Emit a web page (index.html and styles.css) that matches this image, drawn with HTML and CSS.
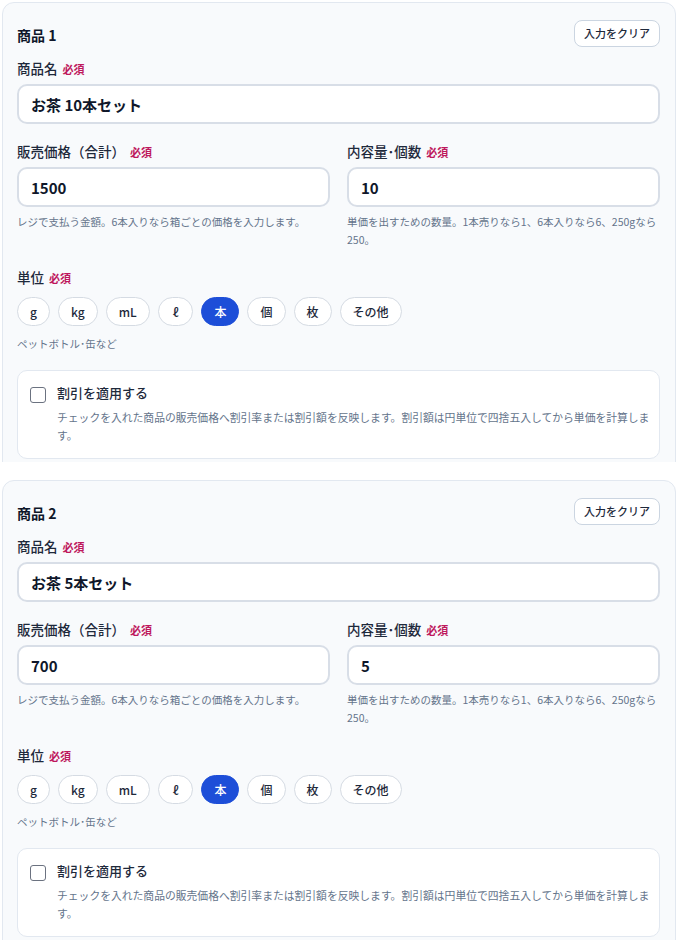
FILE: index.html
```html
<!DOCTYPE html>
<html lang="ja">
<head>
<meta charset="utf-8">
<title>商品入力</title>
<link rel="stylesheet" href="styles.css">
</head>
<body>
<div class="page">
  <div class="clip">
    <section class="card">
      <div class="card-head">
        <h2 class="card-title">商品 1</h2>
        <button class="clear-btn" type="button">入力をクリア</button>
      </div>
      <div class="field">
        <label class="label">商品名 <span class="req">必須</span></label>
        <input class="text-input" type="text" value="お茶 10本セット">
      </div>
      <div class="row">
        <div class="field">
          <label class="label">販売価格（合計） <span class="req">必須</span></label>
          <input class="text-input" type="text" value="1500">
          <p class="help">レジで支払う金額。6本入りなら箱ごとの価格を入力します。</p>
        </div>
        <div class="field">
          <label class="label">内容量･個数 <span class="req">必須</span></label>
          <input class="text-input" type="text" value="10">
          <p class="help">単価を出すための数量。1本売りなら1、6本入りなら6、250gなら250。</p>
        </div>
      </div>
      <div class="unit">
        <label class="label">単位 <span class="req">必須</span></label>
        <div class="pills">
          <span class="pill">g</span>
          <span class="pill">kg</span>
          <span class="pill">mL</span>
          <span class="pill wide">ℓ</span>
          <span class="pill active">本</span>
          <span class="pill">個</span>
          <span class="pill">枚</span>
          <span class="pill">その他</span>
        </div>
        <p class="hint">ペットボトル･缶など</p>
      </div>
      <div class="discount">
        <input class="check" type="checkbox">
        <div class="discount-body">
          <div class="discount-label">割引を適用する</div>
          <p class="discount-desc">チェックを入れた商品の販売価格へ割引率または割引額を反映します。割引額は円単位で四捨五入してから単価を計算します。</p>
        </div>
      </div>
    </section>
  </div>

  <section class="card second">
    <div class="card-head">
      <h2 class="card-title">商品 2</h2>
      <button class="clear-btn" type="button">入力をクリア</button>
    </div>
    <div class="field">
      <label class="label">商品名 <span class="req">必須</span></label>
      <input class="text-input" type="text" value="お茶 5本セット">
    </div>
    <div class="row">
      <div class="field">
        <label class="label">販売価格（合計） <span class="req">必須</span></label>
        <input class="text-input" type="text" value="700">
        <p class="help">レジで支払う金額。6本入りなら箱ごとの価格を入力します。</p>
      </div>
      <div class="field">
        <label class="label">内容量･個数 <span class="req">必須</span></label>
        <input class="text-input" type="text" value="5">
        <p class="help">単価を出すための数量。1本売りなら1、6本入りなら6、250gなら250。</p>
      </div>
    </div>
    <div class="unit">
      <label class="label">単位 <span class="req">必須</span></label>
      <div class="pills">
        <span class="pill">g</span>
        <span class="pill">kg</span>
        <span class="pill">mL</span>
        <span class="pill wide">ℓ</span>
        <span class="pill active">本</span>
        <span class="pill">個</span>
        <span class="pill">枚</span>
        <span class="pill">その他</span>
      </div>
      <p class="hint">ペットボトル･缶など</p>
    </div>
    <div class="discount">
      <input class="check" type="checkbox">
      <div class="discount-body">
        <div class="discount-label">割引を適用する</div>
        <p class="discount-desc">チェックを入れた商品の販売価格へ割引率または割引額を反映します。割引額は円単位で四捨五入してから単価を計算します。</p>
      </div>
    </div>
  </section>
</div>
</body>
</html>
```

FILE: styles.css
```css
* { box-sizing: border-box; }

html, body {
  margin: 0;
  background: #ffffff;
}

body {
  font-family: "Noto Sans CJK JP", "Noto Sans", sans-serif;
  color: #1e293b;
  overflow: hidden;
}

.page {
  padding: 2px 2px 0 2px;
}

.clip {
  height: 460px;
  overflow: hidden;
}

.card {
  background: #f8fafc;
  border: 1px solid #e2e8f0;
  border-radius: 12px;
  padding: 17px 15px 24px 14px;
  display: flex;
  flex-direction: column;
}

.card.second {
  margin-top: 18px;
}

.card-head {
  display: flex;
  justify-content: space-between;
  align-items: center;
  height: 27px;
  margin-bottom: 11px;
}

.card-title {
  margin: 2px 0 0 0;
  font-size: 14px;
  font-weight: 700;
  line-height: 20px;
  color: #0f172a;
}

.clear-btn {
  height: 27px;
  padding: 0 9px;
  background: #ffffff;
  border: 1px solid #cbd5e1;
  border-radius: 8px;
  font-family: inherit;
  font-size: 11px;
  font-weight: 500;
  color: #1e293b;
  line-height: 1;
}

.field {
  display: flex;
  flex-direction: column;
}

.label {
  display: block;
  font-size: 13.5px;
  font-weight: 500;
  line-height: 20px;
  color: #1e293b;
  margin-bottom: 5px;
}

.req {
  font-size: 11px;
  font-weight: 700;
  color: #be185d;
  margin-left: 2px;
}

.text-input {
  width: 100%;
  height: 40px;
  padding: 0 12px;
  background: #ffffff;
  border: 2px solid #d8dee7;
  border-radius: 10px;
  font-family: inherit;
  font-size: 15px;
  font-weight: 700;
  color: #0f172a;
  outline: none;
}

.row {
  display: grid;
  grid-template-columns: 1fr 1fr;
  column-gap: 17px;
  align-items: start;
  margin-top: 17px;
}

.help {
  margin: 6px 0 0 0;
  font-size: 10.5px;
  line-height: 18px;
  color: #64748b;
}

.unit {
  margin-top: 18px;
}

.unit .label {
  margin-bottom: 9px;
}

.pills {
  display: flex;
  gap: 8px;
}

.pill {
  height: 29px;
  padding: 0 12px;
  display: inline-flex;
  align-items: center;
  justify-content: center;
  background: #ffffff;
  border: 1px solid #d5dbe3;
  border-radius: 999px;
  font-size: 12px;
  font-weight: 500;
  color: #1e293b;
}

.pill.wide {
  padding: 0 14px;
}

.pill.active {
  background: #1d4ed8;
  border-color: #1d4ed8;
  color: #ffffff;
}

.hint {
  margin: 9px 0 0 0;
  font-size: 10.5px;
  line-height: 18px;
  color: #64748b;
}

.discount {
  margin-top: 17px;
  background: #ffffff;
  border: 1px solid #e2e8f0;
  border-radius: 10px;
  padding: 12px 6px 14px 12px;
  display: flex;
  gap: 11px;
  align-items: flex-start;
}

.check {
  appearance: none;
  -webkit-appearance: none;
  flex: none;
  width: 16px;
  height: 16px;
  margin: 4px 0 0 0;
  border: 1.5px solid #6b7280;
  border-radius: 3px;
  background: #ffffff;
}

.discount-body {
  flex: 1;
}

.discount-label {
  font-size: 13px;
  font-weight: 500;
  line-height: 20px;
  color: #1e293b;
}

.discount-desc {
  margin: 5px 0 0 0;
  font-size: 10.8px;
  line-height: 18px;
  color: #64748b;
}
```
